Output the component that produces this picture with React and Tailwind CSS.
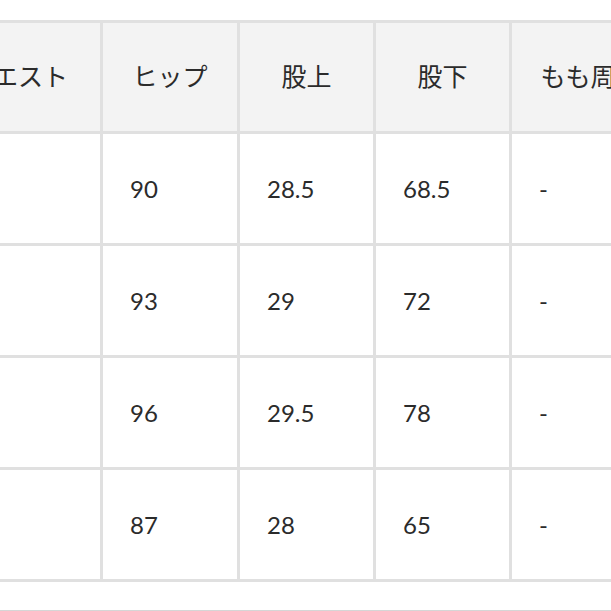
import React from "react";

const headers = ["ウエスト", "ヒップ", "股上", "股下", "もも周り"];
const widths = ["w-[167px]", "w-[137px]", "w-[136px]", "w-[136px]", "w-[160px]"];
const rows = [
  ["", "90", "28.5", "68.5", "-"],
  ["", "93", "29", "72", "-"],
  ["", "96", "29.5", "78", "-"],
  ["", "87", "28", "65", "-"],
];

const App = () => {
  return (
    <div
      className="w-[611px] h-[611px] overflow-hidden bg-white pt-[20px] text-[#2b2b2b]"
      style={{ fontFamily: "Lato, 'Noto Sans CJK JP', sans-serif" }}
    >
      <table className="table-fixed border-collapse ml-[-67px] w-[736px]">
        <thead>
          <tr className="h-[111px]">
            {headers.map((h, i) => (
              <th
                key={i}
                className={`${widths[i]} border-[3px] border-[#e0e0e0] bg-[#f3f3f3] text-[25px] font-normal text-center whitespace-nowrap overflow-hidden`}
              >
                {h}
              </th>
            ))}
          </tr>
        </thead>
        <tbody>
          {rows.map((r, ri) => (
            <tr key={ri} className="h-[112px]">
              {r.map((c, ci) => (
                <td
                  key={ci}
                  className="border-[3px] border-[#e0e0e0] text-[24px] text-left pl-[27px]"
                >
                  {c}
                </td>
              ))}
            </tr>
          ))}
        </tbody>
      </table>
      <div className="mt-[28px] h-[2px] bg-[#d6d6d6]"></div>
    </div>
  );
};

export default App;
